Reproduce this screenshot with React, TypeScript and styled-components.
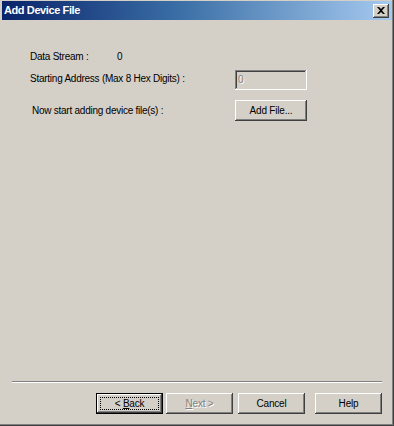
import React from "react";
import styled, { createGlobalStyle, css } from "styled-components";

const FACE = "#d4d0c8";

const GlobalStyle = createGlobalStyle`
  html, body {
    margin: 0;
    padding: 0;
    background: ${FACE};
  }
  body {
    font-family: "Liberation Sans", Arial, sans-serif;
  }
`;

const Window = styled.div`
  box-sizing: border-box;
  width: 394px;
  height: 426px;
  display: flex;
  flex-direction: column;
  background: ${FACE};
  padding: 1px 2px 2px 2px;
  box-shadow: inset -1px -1px #404040, inset -2px -2px #808080;
`;

const TitleBar = styled.div`
  height: 19px;
  flex: none;
  display: flex;
  align-items: center;
  justify-content: space-between;
  padding: 0 3px 0 2px;
  background: linear-gradient(to right, #0a246a 0%, #3a6ea5 45%, #a6caf0 100%);
`;

const Title = styled.span`
  color: #fff;
  font-weight: bold;
  font-size: 11px;
  letter-spacing: -0.4px;
  line-height: 19px;
`;

const CloseButton = styled.button`
  box-sizing: border-box;
  width: 16px;
  height: 14px;
  padding: 0;
  border: none;
  background: ${FACE};
  display: flex;
  align-items: center;
  justify-content: center;
  box-shadow: inset -1px -1px #404040, inset 1px 1px #fff, inset -2px -2px #808080;
`;

const Body = styled.div`
  flex: 1;
  display: flex;
  flex-direction: column;
`;

const Form = styled.div`
  display: grid;
  grid-template-columns: 205px 72px;
  grid-template-rows: 20px 30px 21px;
  align-items: start;
  padding: 30px 0 0 28px;
`;

const Label = styled.div<{ $indent?: number; $top?: number; $center?: boolean }>`
  font-size: 10px;
  letter-spacing: -0.25px;
  line-height: 13px;
  color: #000;
  white-space: nowrap;
  padding-left: ${({ $indent }) => $indent ?? 0}px;
  padding-top: ${({ $top }) => $top ?? 0}px;
  align-self: ${({ $center }) => ($center ? "center" : "start")};
  display: flex;
`;

const LabelKey = styled.span`
  width: 87px;
`;

const raised = css`
  box-shadow: inset -1px -1px #404040, inset 1px 1px #fff, inset -2px -2px #808080,
    inset 2px 2px ${FACE};
`;

const TextInput = styled.div`
  box-sizing: border-box;
  width: 72px;
  height: 20px;
  padding: 3px 3px;
  font-size: 10px;
  line-height: 14px;
  color: #808080;
  text-shadow: 1px 1px #fff;
  background: ${FACE};
  box-shadow: inset -1px -1px #fff, inset 1px 1px #808080, inset -2px -2px ${FACE},
    inset 2px 2px #404040;
`;

const Button = styled.button<{ $default?: boolean; $disabled?: boolean; $wide?: boolean }>`
  box-sizing: border-box;
  width: ${({ $wide }) => ($wide ? 72 : 67)}px;
  height: 21px;
  padding: 0;
  border: none;
  background: ${FACE};
  font-family: "Liberation Sans", Arial, sans-serif;
  font-size: 10px;
  letter-spacing: -0.2px;
  color: ${({ $disabled }) => ($disabled ? "#808080" : "#000")};
  text-shadow: ${({ $disabled }) => ($disabled ? "1px 1px #fff" : "none")};
  position: relative;
  ${raised}
  ${({ $default }) =>
    $default &&
    css`
      box-shadow: inset -1px -1px #000, inset 1px 1px #000, inset -2px -2px #404040,
        inset 2px 2px #fff, inset -3px -3px #808080;
      &::after {
        content: "";
        position: absolute;
        left: 4px;
        top: 4px;
        right: 4px;
        bottom: 4px;
        border: 1px dotted #000;
      }
    `}
`;

const Footer = styled.div`
  margin-top: auto;
  padding: 0 10px 10px 10px;
`;

const Separator = styled.div`
  height: 0;
  border-top: 1px solid #808080;
  border-bottom: 1px solid #fff;
`;

const ButtonRow = styled.div`
  display: flex;
  justify-content: flex-end;
  margin-top: 10px;
`;

const Gap = styled.div<{ $w: number }>`
  width: ${({ $w }) => $w}px;
`;

export default function App() {
  return (
    <>
      <GlobalStyle />
      <Window>
        <TitleBar>
          <Title>Add Device File</Title>
          <CloseButton aria-label="Close">
            <svg width="8" height="7" viewBox="0 0 8 7">
              <path
                d="M0 0h2l2 2 2-2h2L5 3.5 8 7H6L4 5 2 7H0l3-3.5z"
                fill="#000"
              />
            </svg>
          </CloseButton>
        </TitleBar>
        <Body>
          <Form>
            <Label>
              <LabelKey>Data Stream :</LabelKey>
              <span>0</span>
            </Label>
            <div />
            <Label $top={2}>Starting Address (Max 8 Hex Digits) :</Label>
            <TextInput>0</TextInput>
            <Label $indent={2} $center>
              Now start adding device file(s) :
            </Label>
            <Button $wide>Add File...</Button>
          </Form>
          <Footer>
            <Separator />
            <ButtonRow>
              <Button $default>
                &lt; <u>B</u>ack
              </Button>
              <Gap $w={3} />
              <Button $disabled>
                <u>N</u>ext &gt;
              </Button>
              <Gap $w={5} />
              <Button>Cancel</Button>
              <Gap $w={10} />
              <Button>Help</Button>
            </ButtonRow>
          </Footer>
        </Body>
      </Window>
    </>
  );
}
